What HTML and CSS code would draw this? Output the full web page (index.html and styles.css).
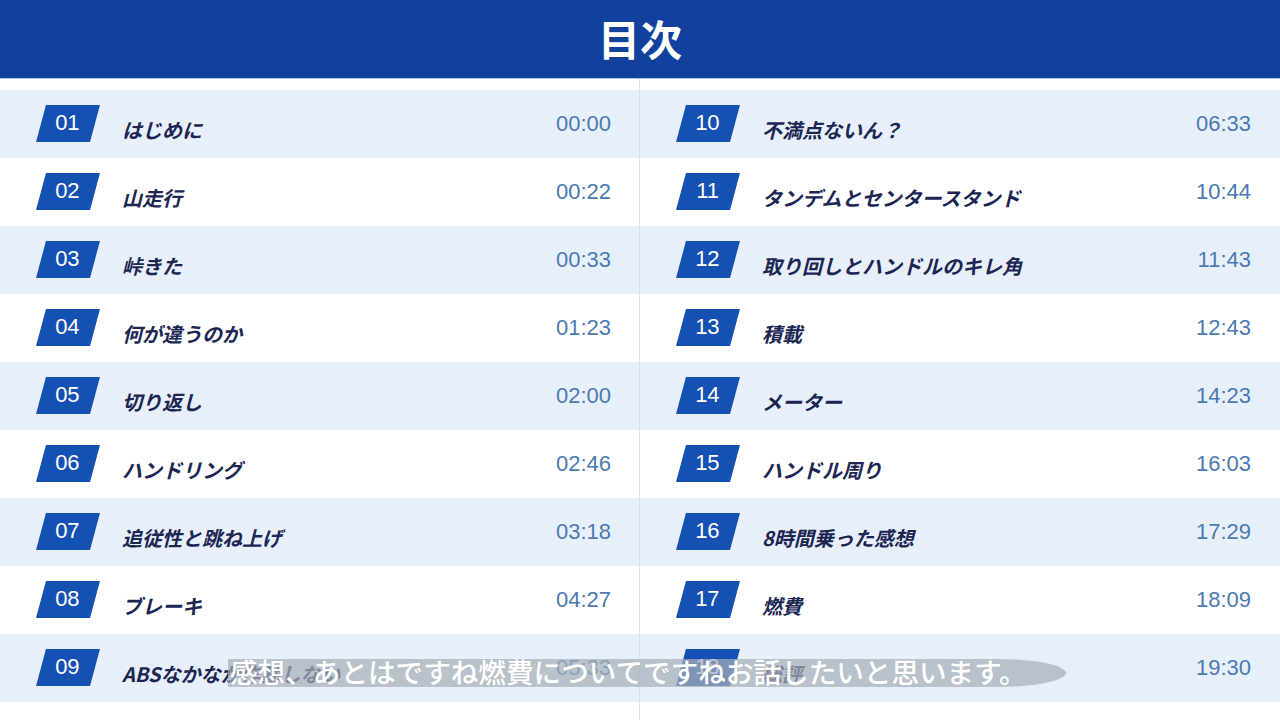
FILE: index.html
```html
<!DOCTYPE html>
<html lang="ja">
<head>
<meta charset="utf-8">
<title>目次</title>
<link rel="stylesheet" href="styles.css">
</head>
<body>
<header class="header"><h1 class="header-title">目次</h1></header>
<main class="toc">
  <section class="col">
    <div class="row odd"><span class="badge"><span class="badge-num">01</span></span><span class="title">はじめに</span><span class="time">00:00</span></div>
    <div class="row"><span class="badge"><span class="badge-num">02</span></span><span class="title">山走行</span><span class="time">00:22</span></div>
    <div class="row odd"><span class="badge"><span class="badge-num">03</span></span><span class="title">峠きた</span><span class="time">00:33</span></div>
    <div class="row"><span class="badge"><span class="badge-num">04</span></span><span class="title">何が違うのか</span><span class="time">01:23</span></div>
    <div class="row odd"><span class="badge"><span class="badge-num">05</span></span><span class="title">切り返し</span><span class="time">02:00</span></div>
    <div class="row"><span class="badge"><span class="badge-num">06</span></span><span class="title">ハンドリング</span><span class="time">02:46</span></div>
    <div class="row odd"><span class="badge"><span class="badge-num">07</span></span><span class="title">追従性と跳ね上げ</span><span class="time">03:18</span></div>
    <div class="row"><span class="badge"><span class="badge-num">08</span></span><span class="title">ブレーキ</span><span class="time">04:27</span></div>
    <div class="row odd"><span class="badge"><span class="badge-num">09</span></span><span class="title">ABSなかなか作動しない</span><span class="time">05:33</span></div>
  </section>
  <section class="col col-right">
    <div class="row odd"><span class="badge"><span class="badge-num">10</span></span><span class="title">不満点ないん？</span><span class="time">06:33</span></div>
    <div class="row"><span class="badge"><span class="badge-num">11</span></span><span class="title">タンデムとセンタースタンド</span><span class="time">10:44</span></div>
    <div class="row odd"><span class="badge"><span class="badge-num">12</span></span><span class="title">取り回しとハンドルのキレ角</span><span class="time">11:43</span></div>
    <div class="row"><span class="badge"><span class="badge-num">13</span></span><span class="title">積載</span><span class="time">12:43</span></div>
    <div class="row odd"><span class="badge"><span class="badge-num">14</span></span><span class="title">メーター</span><span class="time">14:23</span></div>
    <div class="row"><span class="badge"><span class="badge-num">15</span></span><span class="title">ハンドル周り</span><span class="time">16:03</span></div>
    <div class="row odd"><span class="badge"><span class="badge-num">16</span></span><span class="title">8時間乗った感想</span><span class="time">17:29</span></div>
    <div class="row"><span class="badge"><span class="badge-num">17</span></span><span class="title">燃費</span><span class="time">18:09</span></div>
    <div class="row odd"><span class="badge"><span class="badge-num">18</span></span><span class="title">総評</span><span class="time">19:30</span></div>
  </section>
</main>
<div class="subtitle"><span class="subtitle-text">感想、あとはですね燃費についてですねお話したいと思います。</span></div>
</body>
</html>
```

FILE: styles.css
```css
html, body {
  margin: 0;
  padding: 0;
}
body {
  width: 1280px;
  height: 720px;
  overflow: hidden;
  background: #ffffff;
  font-family: "Noto Sans CJK JP", "Noto Sans", sans-serif;
  position: relative;
}
.header {
  height: 78px;
  background: #12419d;
  display: flex;
  align-items: center;
  justify-content: center;
  border-bottom: 1px solid #a9c6ea;
}
.header-title {
  margin: 0;
  color: #ffffff;
  font-size: 42px;
  font-weight: 700;
  line-height: 1;
  padding-bottom: 2px;
}
.toc {
  display: grid;
  grid-template-columns: 640px 640px;
  height: 641px;
}
.col {
  padding-top: 11px;
  display: flex;
  flex-direction: column;
}
.col-right {
  border-left: 1px solid #d9e0e8;
  margin-left: -1px;
}
.row {
  height: 68px;
  display: flex;
  align-items: center;
  padding-left: 41px;
  padding-right: 29px;
  box-sizing: border-box;
  background: #ffffff;
}
.row.odd {
  background: #e7f0fa;
}
.badge {
  width: 54px;
  height: 37px;
  background: #1550b3;
  transform: skewX(-15deg);
  display: flex;
  align-items: center;
  justify-content: center;
  flex-shrink: 0;
  margin-top: -1px;
}
.badge-num {
  transform: skewX(15deg);
  color: #ffffff;
  font-family: "Liberation Sans", "Noto Sans", sans-serif;
  font-size: 22px;
  font-weight: 400;
  line-height: 1;
  margin-top: -1px;
  margin-left: -1px;
}
.title {
  margin-left: 27px;
  margin-top: 12px;
  font-size: 20px;
  font-weight: 700;
  font-style: italic;
  color: #1b2653;
  line-height: 1;
  white-space: nowrap;
}
.time {
  margin-left: auto;
  font-family: "Liberation Sans", sans-serif;
  font-size: 22px;
  font-weight: 400;
  color: #4a7ab2;
  line-height: 1;
}
.subtitle {
  position: absolute;
  left: 228px;
  top: 659px;
  width: 838px;
  height: 28px;
  background: rgba(168, 174, 184, 0.72);
  border-radius: 0 70px 70px 0 / 0 14px 14px 0;
}
.subtitle-text {
  position: absolute;
  left: 2px;
  top: -4px;
  font-family: "Noto Sans CJK JP", sans-serif;
  font-size: 27.6px;
  font-weight: 500;
  line-height: 1.2;
  color: #ffffff;
  white-space: nowrap;
}
```
